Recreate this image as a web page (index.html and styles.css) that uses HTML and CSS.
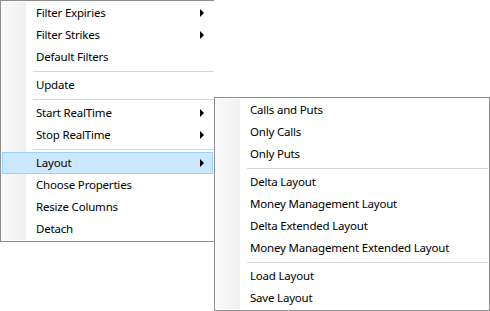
FILE: index.html
```html
<!DOCTYPE html>
<html lang="en">
<head>
    <meta charset="UTF-8">
    <meta name="viewport" content="width=device-width, initial-scale=1.0">
    <link rel="stylesheet" href="styles.css">
</head>
<body>
    <div class="menu-area">
        <ul class="menu main-menu">
            <li class="menu-item has-sub">Filter Expiries</li>
            <li class="menu-item has-sub">Filter Strikes</li>
            <li class="menu-item">Default Filters</li>
            <li class="separator"></li>
            <li class="menu-item">Update</li>
            <li class="separator"></li>
            <li class="menu-item has-sub">Start RealTime</li>
            <li class="menu-item has-sub">Stop RealTime</li>
            <li class="separator"></li>
            <li class="menu-item has-sub selected">Layout</li>
            <li class="menu-item">Choose Properties</li>
            <li class="menu-item">Resize Columns</li>
            <li class="menu-item">Detach</li>
        </ul>

        <!-- Layout submenu -->
        <ul class="menu sub-menu">
            <li class="menu-item">Calls and Puts</li>
            <li class="menu-item">Only Calls</li>
            <li class="menu-item">Only Puts</li>
            <li class="separator"></li>
            <li class="menu-item">Delta Layout</li>
            <li class="menu-item">Money Management Layout</li>
            <li class="menu-item">Delta Extended Layout</li>
            <li class="menu-item">Money Management Extended Layout</li>
            <li class="separator"></li>
            <li class="menu-item">Load Layout</li>
            <li class="menu-item">Save Layout</li>
        </ul>
    </div>
</body>
</html>
```

FILE: styles.css
```css
body {
    margin: 0;
    background: #fff;
    font-family: "Noto Sans", "Open Sans", sans-serif;
    font-size: 11.5px;
    letter-spacing: -0.2px;
    color: #000;
}

.menu-area {
    position: relative;
    width: 490px;
    height: 311px;
}

.menu {
    list-style: none;
    margin: 0;
    padding: 1px 0;
    background-color: #fff;
    border: 1px solid #8f8f8f;
    box-sizing: border-box;
}

/* the grey image margin on the left */
.menu::before {
    content: "";
    position: absolute;
    top: 1px;
    bottom: 1px;
    left: 1px;
    width: 24px;
    background: linear-gradient(to right, #fafafa, #f0f0f0);
}

.main-menu {
    position: relative;
    width: 214px;
    border-right: none;
}

.sub-menu {
    position: absolute;
    left: 214px;
    top: 97px;
    width: 276px;
    height: 214px;
}

.menu-item {
    position: relative;
    height: 22px;
    line-height: 20px;
    margin: 0 1px;
    padding-left: 33px;
    border: 1px solid transparent;
    box-sizing: border-box;
    white-space: nowrap;
}

.menu-item.selected {
    background-color: #cce8ff;
    border-color: #99d1ff;
}

.has-sub::after {
    content: "";
    position: absolute;
    right: 8px;
    top: 6px;
    border-left: 4px solid #000;
    border-top: 4px solid transparent;
    border-bottom: 4px solid transparent;
}

.separator {
    position: relative;
    height: 6px;
}

.separator::after {
    content: "";
    position: absolute;
    left: 32px;
    right: 0;
    top: 3px;
    border-top: 1px solid #d7d7d7;
}

.sub-menu .separator::after {
    right: 1px;
}
```
